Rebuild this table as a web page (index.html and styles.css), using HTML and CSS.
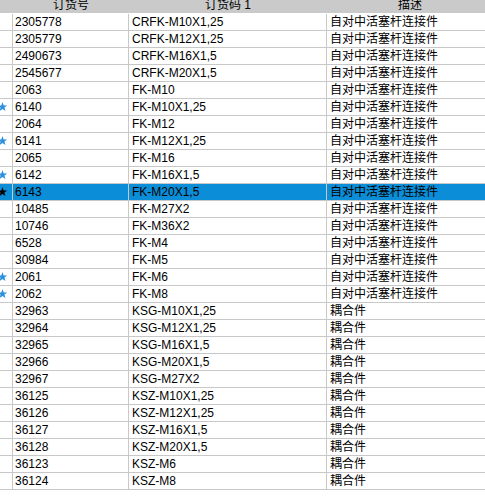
FILE: index.html
```html
<!DOCTYPE html>
<html>
<head>
<meta charset="utf-8">
<link rel="stylesheet" href="styles.css">
</head>
<body>
<svg class="defs" width="0" height="0"><defs><polygon id="star" points="2.5,3 3.676,6.382 7.255,6.455 4.402,8.618 5.439,12.045 2.5,10 -0.439,12.045 0.598,8.618 -2.255,6.455 1.324,6.382"/></defs></svg>
<div class="grid">
  <div class="head">
    <div class="ind"></div>
    <div class="hc c1"><span>订货号</span></div>
    <div class="hc c2"><span>订货码 1</span></div>
    <div class="hc c3"><span>描述</span></div>
  </div>
  <div class="row"><div class="ind"></div><div class="c c1">2305778</div><div class="c c2">CRFK-M10X1,25</div><div class="c c3">自对中活塞杆连接件</div></div>
  <div class="row"><div class="ind"></div><div class="c c1">2305779</div><div class="c c2">CRFK-M12X1,25</div><div class="c c3">自对中活塞杆连接件</div></div>
  <div class="row"><div class="ind"></div><div class="c c1">2490673</div><div class="c c2">CRFK-M16X1,5</div><div class="c c3">自对中活塞杆连接件</div></div>
  <div class="row"><div class="ind"></div><div class="c c1">2545677</div><div class="c c2">CRFK-M20X1,5</div><div class="c c3">自对中活塞杆连接件</div></div>
  <div class="row"><div class="ind"></div><div class="c c1">2063</div><div class="c c2">FK-M10</div><div class="c c3">自对中活塞杆连接件</div></div>
  <div class="row"><div class="ind"><svg class="star" width="12" height="16"><use href="#star"/></svg></div><div class="c c1">6140</div><div class="c c2">FK-M10X1,25</div><div class="c c3">自对中活塞杆连接件</div></div>
  <div class="row"><div class="ind"></div><div class="c c1">2064</div><div class="c c2">FK-M12</div><div class="c c3">自对中活塞杆连接件</div></div>
  <div class="row"><div class="ind"><svg class="star" width="12" height="16"><use href="#star"/></svg></div><div class="c c1">6141</div><div class="c c2">FK-M12X1,25</div><div class="c c3">自对中活塞杆连接件</div></div>
  <div class="row"><div class="ind"></div><div class="c c1">2065</div><div class="c c2">FK-M16</div><div class="c c3">自对中活塞杆连接件</div></div>
  <div class="row"><div class="ind"><svg class="star" width="12" height="16"><use href="#star"/></svg></div><div class="c c1">6142</div><div class="c c2">FK-M16X1,5</div><div class="c c3">自对中活塞杆连接件</div></div>
  <div class="row sel"><div class="ind"><svg class="star" width="12" height="16"><use href="#star"/></svg></div><div class="c c1">6143</div><div class="c c2">FK-M20X1,5</div><div class="c c3">自对中活塞杆连接件</div></div>
  <div class="row"><div class="ind"></div><div class="c c1">10485</div><div class="c c2">FK-M27X2</div><div class="c c3">自对中活塞杆连接件</div></div>
  <div class="row"><div class="ind"></div><div class="c c1">10746</div><div class="c c2">FK-M36X2</div><div class="c c3">自对中活塞杆连接件</div></div>
  <div class="row"><div class="ind"></div><div class="c c1">6528</div><div class="c c2">FK-M4</div><div class="c c3">自对中活塞杆连接件</div></div>
  <div class="row"><div class="ind"></div><div class="c c1">30984</div><div class="c c2">FK-M5</div><div class="c c3">自对中活塞杆连接件</div></div>
  <div class="row"><div class="ind"><svg class="star" width="12" height="16"><use href="#star"/></svg></div><div class="c c1">2061</div><div class="c c2">FK-M6</div><div class="c c3">自对中活塞杆连接件</div></div>
  <div class="row"><div class="ind"><svg class="star" width="12" height="16"><use href="#star"/></svg></div><div class="c c1">2062</div><div class="c c2">FK-M8</div><div class="c c3">自对中活塞杆连接件</div></div>
  <div class="row"><div class="ind"></div><div class="c c1">32963</div><div class="c c2">KSG-M10X1,25</div><div class="c c3">耦合件</div></div>
  <div class="row"><div class="ind"></div><div class="c c1">32964</div><div class="c c2">KSG-M12X1,25</div><div class="c c3">耦合件</div></div>
  <div class="row"><div class="ind"></div><div class="c c1">32965</div><div class="c c2">KSG-M16X1,5</div><div class="c c3">耦合件</div></div>
  <div class="row"><div class="ind"></div><div class="c c1">32966</div><div class="c c2">KSG-M20X1,5</div><div class="c c3">耦合件</div></div>
  <div class="row"><div class="ind"></div><div class="c c1">32967</div><div class="c c2">KSG-M27X2</div><div class="c c3">耦合件</div></div>
  <div class="row"><div class="ind"></div><div class="c c1">36125</div><div class="c c2">KSZ-M10X1,25</div><div class="c c3">耦合件</div></div>
  <div class="row"><div class="ind"></div><div class="c c1">36126</div><div class="c c2">KSZ-M12X1,25</div><div class="c c3">耦合件</div></div>
  <div class="row"><div class="ind"></div><div class="c c1">36127</div><div class="c c2">KSZ-M16X1,5</div><div class="c c3">耦合件</div></div>
  <div class="row"><div class="ind"></div><div class="c c1">36128</div><div class="c c2">KSZ-M20X1,5</div><div class="c c3">耦合件</div></div>
  <div class="row"><div class="ind"></div><div class="c c1">36123</div><div class="c c2">KSZ-M6</div><div class="c c3">耦合件</div></div>
  <div class="row"><div class="ind"></div><div class="c c1">36124</div><div class="c c2">KSZ-M8</div><div class="c c3">耦合件</div></div>
</div>
</body>
</html>
```

FILE: styles.css
```css
html, body {
  margin: 0;
  padding: 0;
  background: #ffffff;
  overflow: hidden;
}
body {
  width: 485px;
  height: 497px;
  font-family: "Liberation Sans", "Noto Sans CJK SC", sans-serif;
  font-size: 12px;
  color: #000000;
}
.defs {
  position: absolute;
}
.grid {
  width: 493px;
  display: flex;
  flex-direction: column;
}
.head {
  display: flex;
  height: 14px;
  background: #cacaca;
  border-bottom: 1px solid #ffffff;
  box-sizing: border-box;
}
.head .ind {
  border-right: none;
}
.hc {
  display: flex;
  align-items: flex-end;
  justify-content: center;
  overflow: hidden;
  line-height: 16px;
  height: 13px;
}
.row {
  display: flex;
  height: 17px;
  border-bottom: 1px solid #c8c8c8;
  box-sizing: border-box;
  line-height: 16px;
}
.row.sel {
  background: #0b8ed7;
}
.ind {
  width: 13px;
  flex: none;
  border-right: 1px solid #c8c8c8;
  box-sizing: border-box;
  overflow: hidden;
}
.star {
  display: block;
  fill: #2a8fdc;
}
.sel .star {
  fill: #000000;
}
.c1 {
  width: 116px;
  flex: none;
}
.c2 {
  width: 198px;
  flex: none;
}
.c3 {
  flex: 1;
}
.c {
  box-sizing: border-box;
  padding-left: 2px;
  white-space: nowrap;
  overflow: hidden;
}
.row .c1, .row .c2 {
  border-right: 1px solid #c8c8c8;
}
.row .c2 {
  padding-left: 3px;
}
.row .c3 {
  padding-left: 3px;
}
.head .c1, .head .c2 {
  box-sizing: border-box;
}
```
